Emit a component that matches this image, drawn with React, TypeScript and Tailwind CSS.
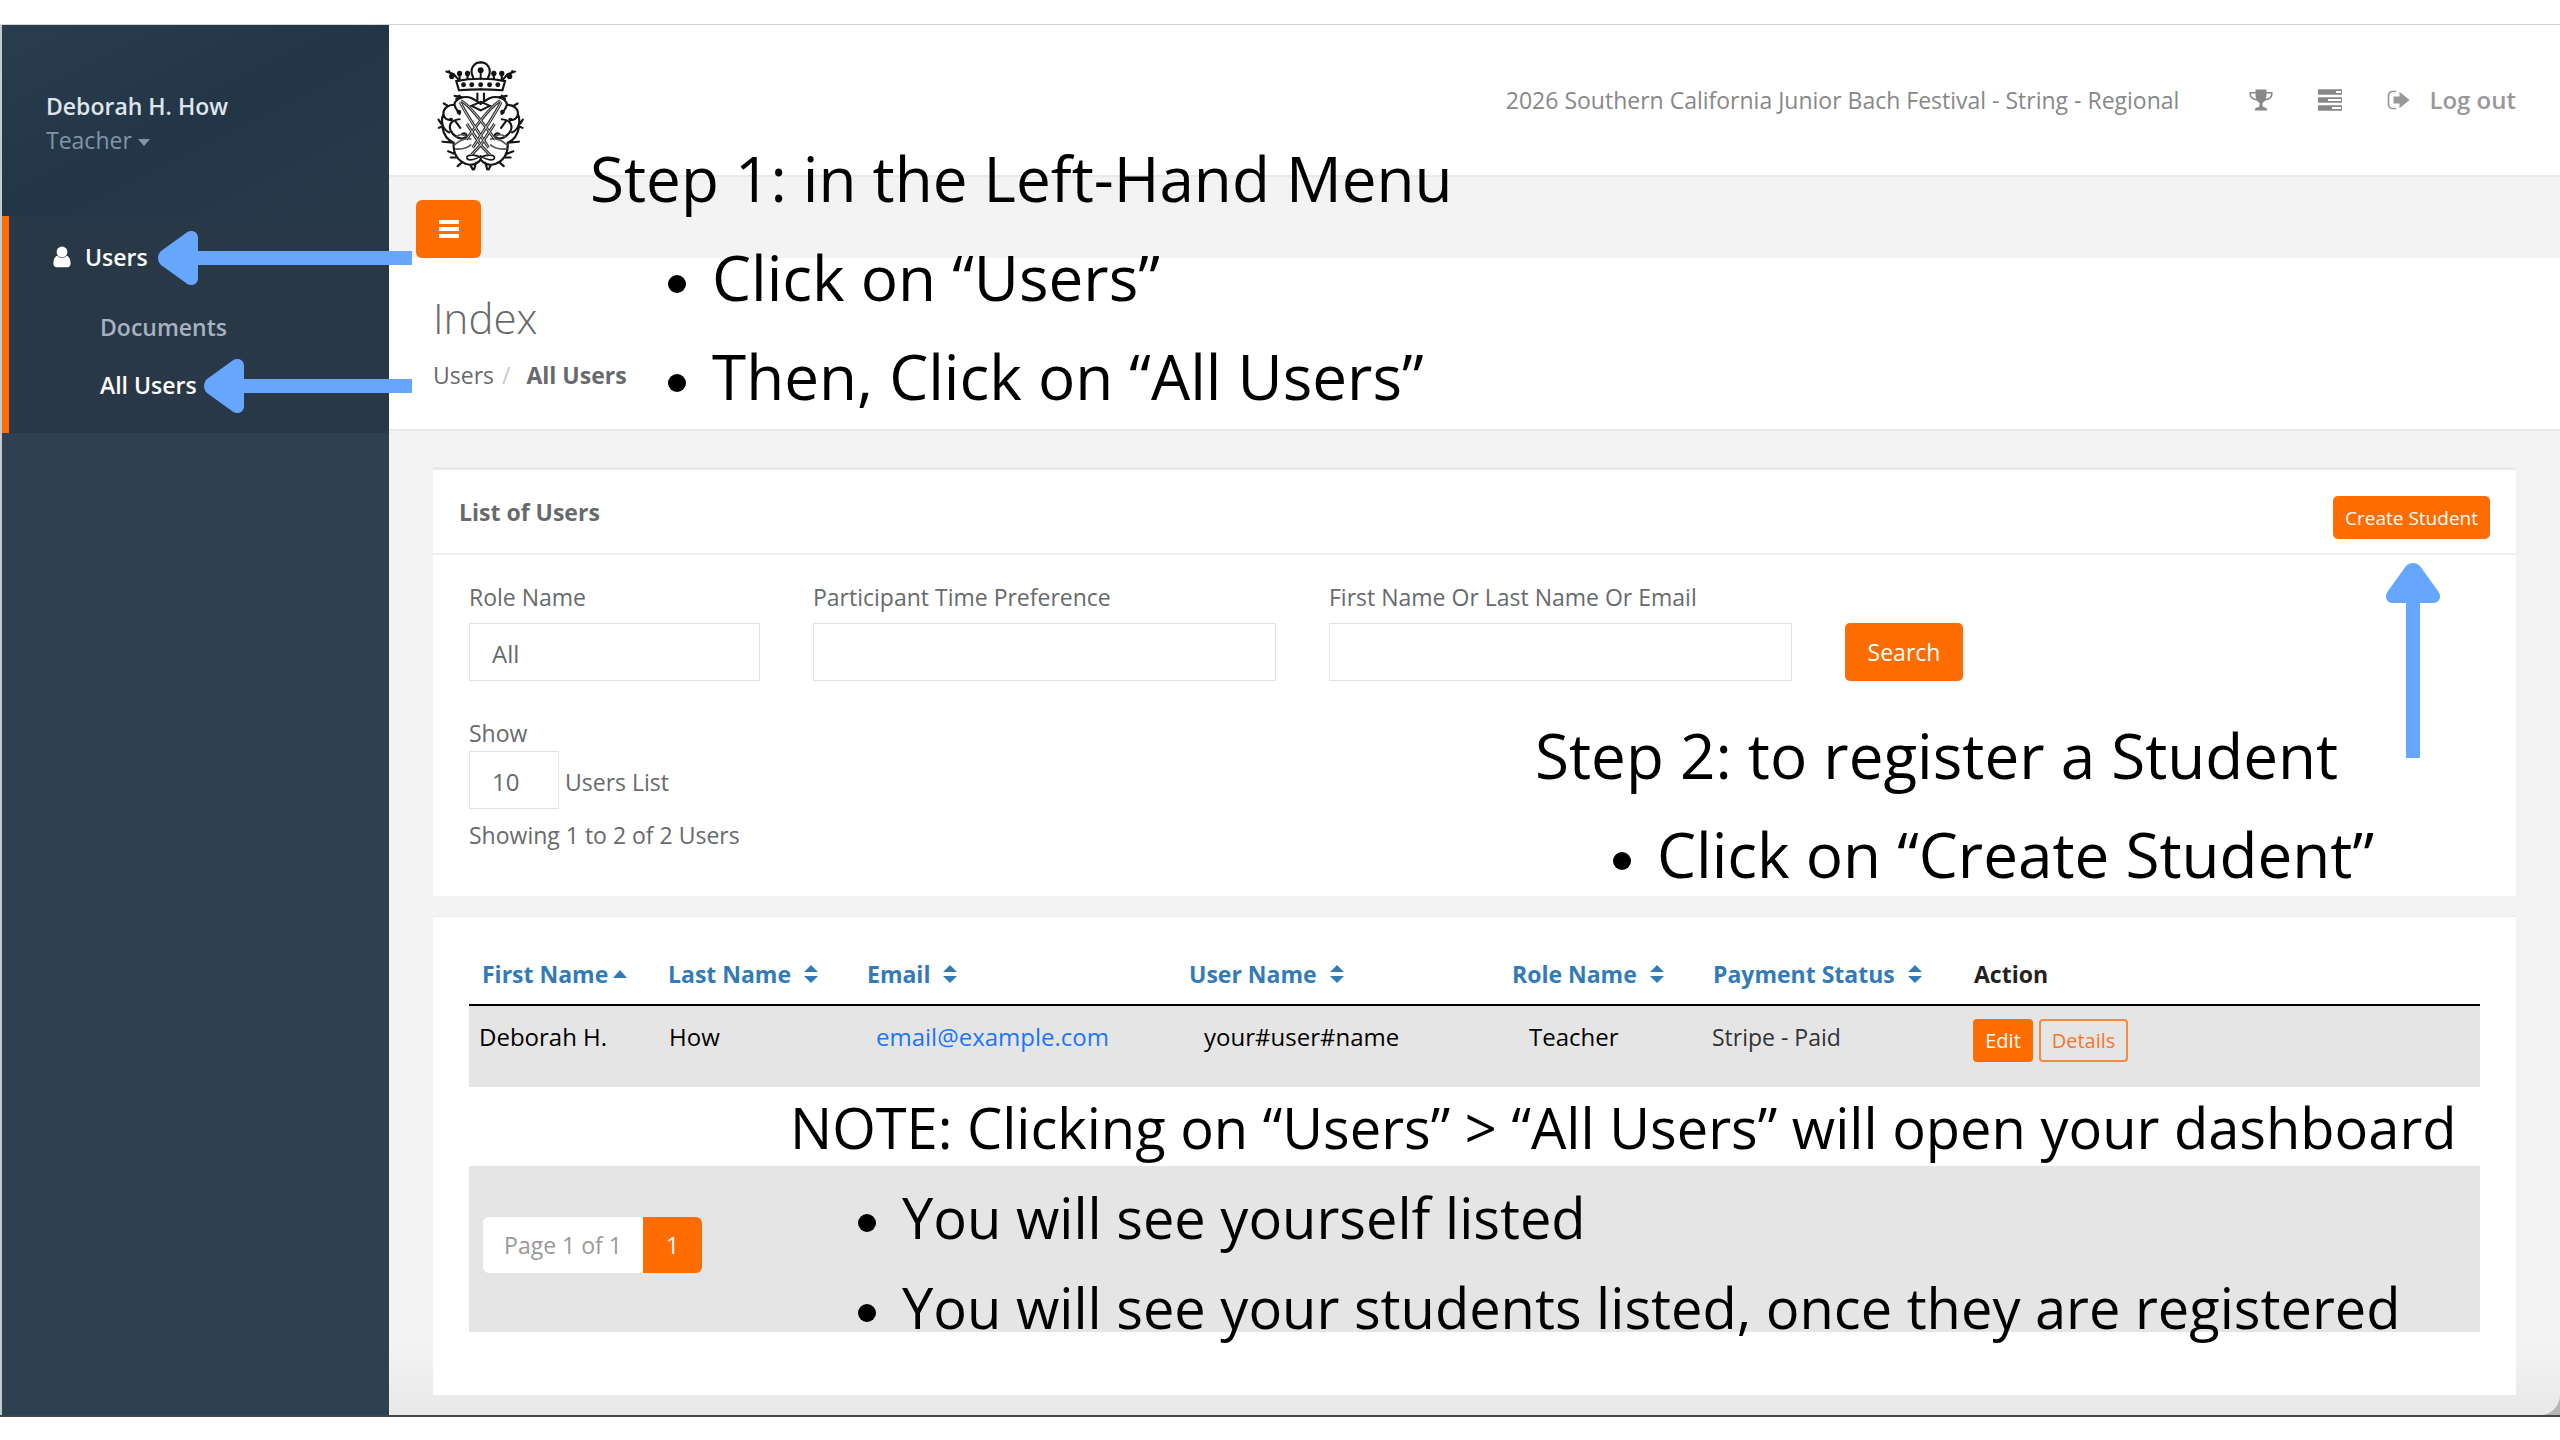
import React from 'react';

type Column = { title: string; width: string; sort?: 'asc' | 'both' };

const columns: Column[] = [
    { title: 'First Name', width: 'w-[186px]', sort: 'asc' },
    { title: 'Last Name', width: 'w-[199px]', sort: 'both' },
    { title: 'Email', width: 'w-[322px]', sort: 'both' },
    { title: 'User Name', width: 'w-[323px]', sort: 'both' },
    { title: 'Role Name', width: 'w-[201px]', sort: 'both' },
    { title: 'Payment Status', width: 'w-[261px]', sort: 'both' },
    { title: 'Action', width: 'w-auto' },
];

const fieldClass =
    'block h-[58px] w-full appearance-none rounded-none border border-[#e1e2e3] bg-white px-[22px] pt-1 text-[24px] text-[#676a6c]';

function UserIcon() {
    return (
        <svg viewBox="0 0 18 22" className="h-[22px] w-[18px] fill-current">
            <circle cx="9" cy="6" r="5.4" />
            <path d="M4.6 9.8c-3 .6-4.2 4.4-4.2 7.600 0 2 1.300 3.800 3.300 3.800h10.600c2 0 3.300-1.800 3.300-3.800 0-3.200-1.200-7-4.200-7.600C12.300 11.200 10.700 12 9 12s-3.300-.8-4.400-2.200z" />
        </svg>
    );
}

function TrophyIcon() {
    return (
        <svg viewBox="0 0 24 22" className="h-[22px] w-6 fill-current">
            <path d="M6.500 0.500h11V6c0 4-1.600 6.600-4 8v2.500c0 1.200.8 1.700 2.500 1.900 1.300.2 2 .9 2 2.100v1H6v-1c0-1.200.7-1.900 2-2.100 1.700-.2 2.500-.7 2.500-1.900V14c-2.400-1.400-4-4-4-8z" />
            <path d="M6.800 3.800H1.200V5.500c0 2.700 3 5 7 5.300M17.200 3.800h5.600V5.500c0 2.700-3 5-7 5.300" fill="none" stroke="currentColor" strokeWidth="1.500" />
        </svg>
    );
}

function TasksIcon() {
    return (
        <svg viewBox="0 0 26 22" className="h-[22px] w-[26px]" fill="none" stroke="currentColor">
            <path d="M1 3h24M1 11h24M1 19h24" strokeWidth="5.600" />
            <path d="M19 3h5M11 11h13M15 19h9" stroke="#fff" strokeWidth="2.200" />
        </svg>
    );
}

function SignOutIcon() {
    return (
        <svg viewBox="0 0 24 20" className="h-5 w-6">
            <path d="M9 1.500H5.500A4 4 0 0 0 1.500 5.500v9a4 4 0 0 0 4 4H9" fill="none" stroke="currentColor" strokeWidth="1.700" />
            <path d="M6.500 6.500h6V1.800L22.500 10l-10 8.200v-4.700h-6z" fill="currentColor" />
        </svg>
    );
}

function SortIcon({ kind }: { kind: 'asc' | 'both' }) {
    if (kind === 'asc') {
        return (
            <svg viewBox="0 0 14 8" className="h-2 w-[14px] fill-current">
                <path d="M0 8 7 0l7 8z" />
            </svg>
        );
    }
    return (
        <svg viewBox="0 0 14 18" className="ml-2 h-[18px] w-[14px] fill-current">
            <path d="M0 7 7 0l7 7zM0 11l7 7 7-7z" />
        </svg>
    );
}

// One half of the crest, mirrored around x=246 for the other half
function CrestHalf() {
    return (
        <>
            <path d="M246 149c-24 0-44 1-66 3l-8-28c24-5 48-7 74-7M180 121l-16-18-22-8M160 110l-10-16" />
            <path d="M182 120v-20M206 117V96M224 115c-6-12-9-24-1-36 6-9 14-12 23-12" />
            <path d="M236 182v-20M166 196c2-14 12-20 27-23 22-4 36 8 53 20M166 196c4 14 12 20 16 28M193 173l-26-4M182 168l-10 10" />
            <path d="M166 196c-20 0-34 12-33 28 1 14 12 20 24 17M148 200l-14-8M133 224c-10 24-2 48 18 56M126 253l-8-12M128 262l-9 4" />
            <path d="M182 240c-22 2-34 14-28 32 6 16 28 32 44 24 10-6 4-16-8-12M168 244l16 22" />
            <path d="M130 265c4 24 14 38 34 46l-34-3M164 311c-2 30 8 52 36 64 16 6 32 4 46-12M164 344l-17-7M172 356l-17 0M190 370l-14 12M214 378l8 14M232 372l-6 20" />
            <path d="M166 318c16-14 36-22 50-18M170 330c18 2 34-2 46-12M172 292c10-8 24-6 32 2" strokeWidth="5" stroke="#555" />
            <path d="M246 358c-12-12-44-12-42-1 2 11 26 6 42-5" strokeWidth="5" />
        </>
    );
}

function Crest() {
    return (
        <svg viewBox="114 60 266 340" className="mt-8 h-28 w-[88px]" fill="none" stroke="#151515" strokeWidth="6.500" strokeLinecap="round" role="img" aria-label="Crest">
            <CrestHalf />
            <g transform="translate(492 0) scale(-1 1)">
                <CrestHalf />
            </g>
            <g fill="#151515" stroke="none">
                {[158, 182, 206, 286, 310, 334].map((x) => (
                    <circle key={x} cx={x} cy={x === 158 || x === 334 ? 110 : 101} r="8" />
                ))}
                {[194, 219, 246, 273, 298].map((x) => (
                    <circle key={x} cx={x} cy="135" r="7.500" />
                ))}
                <circle cx="246" cy="91" r="9" />
                <path d="M243 96h6v20h-6z" />
                <circle cx="180" cy="218" r="7" />
                <circle cx="312" cy="218" r="7" />
                <circle cx="156" cy="241" r="6" />
                <circle cx="336" cy="241" r="6" />
            </g>
            <path d="M246 187l-28 12 28 14 28-14z" strokeWidth="6" />
            {/* Woven ribbons: dark outline with a light core */}
            <g stroke="#333" strokeWidth="9" strokeLinecap="butt">
                <path d="M184 188c14 30 50 84 86 138M308 188c-14 30-50 84-86 138" />
                <path d="M186 184c18 8 48 40 104 118M306 184c-18 8-48 40-104 118" />
                <path d="M204 254l42 64 28 30M288 254l-42 64-28 30" />
            </g>
            <g stroke="#ccc" strokeWidth="3" strokeLinecap="butt">
                <path d="M184 188c14 30 50 84 86 138M308 188c-14 30-50 84-86 138" />
                <path d="M186 184c18 8 48 40 104 118M306 184c-18 8-48 40-104 118" />
                <path d="M204 254l42 64 28 30M288 254l-42 64-28 30" />
            </g>
        </svg>
    );
}

function LeftArrow({ className }: { className: string }) {
    return (
        <div className={`absolute right-full flex h-[54px] items-center ${className}`}>
            <svg viewBox="0 0 40 54" className="h-[54px] w-10 shrink-0 fill-[#66a6ff]">
                <path d="M3 20 28 2c5-4 12-2 12 5v40c0 7-7 9-12 5L3 34c-4-4-4-10 0-14z" />
            </svg>
            <div className="h-[14px] flex-1 bg-[#66a6ff]" />
        </div>
    );
}

function Sidebar() {
    return (
        <aside className="w-[389px] shrink-0 border-l-2 border-[#c3cad0] bg-[#2f4050] font-semibold">
            <div className="h-[191px] bg-gradient-to-br from-[#293d4e] via-[#233647] to-[#283a4a] px-11 pt-16 leading-[34px]">
                <div className="text-[#dfe4ed]">Deborah H. How</div>
                <button type="button" className="flex items-center gap-[6px] font-normal text-[#8095a8]">
                    Teacher
                    <svg viewBox="0 0 12 7" className="mt-1 h-[7px] w-3 fill-current">
                        <path d="M0 0h12L6 7z" />
                    </svg>
                </button>
            </div>
            <nav className="h-[217px] border-l-[7px] border-[#ff6c00] bg-[#293846] pt-[22px] leading-[38px] text-white">
                <a href="#users" className="flex items-center gap-[14px] pl-11">
                    <UserIcon />
                    Users
                </a>
                <div className="flex flex-col gap-5 pt-8 pl-[91px]">
                    <a href="#documents" className="text-[#a7b1c2]">Documents</a>
                    <a href="#all-users">All Users</a>
                </div>
            </nav>
        </aside>
    );
}

function TopBar() {
    return (
        <header className="flex h-[152px] items-center justify-between border-b-2 border-[#e7eaec] bg-white pr-11 pl-12">
            <Crest />
            <div className="flex items-center text-[#888]">
                <span>2026 Southern California Junior Bach Festival - String - Regional</span>
                <a href="#awards" aria-label="Awards" className="ml-[70px]"><TrophyIcon /></a>
                <a href="#tasks" aria-label="Tasks" className="ml-11"><TasksIcon /></a>
                <a href="#logout" className="ml-11 flex items-center gap-[18px] text-[24px] font-semibold text-[#999]">
                    <SignOutIcon />
                    Log out
                </a>
            </div>
        </header>
    );
}

function Filters() {
    return (
        <section className="mx-11 mt-9 h-[429px] border-t-[3px] border-[#e7eaec] bg-white">
            <div className="flex h-[85px] items-center justify-between border-b-2 border-[#eeeff0] px-[26px]">
                <h2 className="font-bold">List of Users</h2>
                <button type="button" className="mt-3 h-[43px] rounded-[5px] bg-[#ff6c00] px-3 text-[19px] font-medium text-white">Create Student</button>
            </div>
            <form className="px-9 pt-[26px]" onSubmit={(e) => e.preventDefault()}>
                <div className="flex items-end gap-[53px]">
                    <div className="w-[291px]">
                        <label htmlFor="role" className="mb-[10px] block">Role Name</label>
                        <select id="role" className={fieldClass}>
                            <option>All</option>
                        </select>
                    </div>
                    <div className="w-[463px]">
                        <label htmlFor="preference" className="mb-[10px] block">Participant Time Preference</label>
                        <input id="preference" type="text" className={fieldClass} />
                    </div>
                    <div className="w-[463px]">
                        <label htmlFor="query" className="mb-[10px] block">First Name Or Last Name Or Email</label>
                        <input id="query" type="text" className={fieldClass} />
                    </div>
                    <button type="submit" className="h-[58px] w-[118px] rounded-[5px] bg-[#ff6c00] text-white">Search</button>
                </div>
                <label htmlFor="size" className="mt-9 mb-[2px] block">Show</label>
                <div className="flex items-center gap-[6px]">
                    <div className="w-[90px]">
                        <select id="size" className={fieldClass}>
                            <option>10</option>
                        </select>
                    </div>
                    <span className="pt-1">Users List</span>
                </div>
                <p className="mt-[10px]">Showing 1 to 2 of 2 Users</p>
            </form>
        </section>
    );
}

function UsersTable() {
    return (
        <section className="mx-11 mt-5 h-[479px] border-t border-[#e7eaec] bg-white px-9 pt-9">
            <table className="w-full table-fixed text-left">
                <thead>
                    <tr className="h-[52px] border-b-2 border-black">
                        {columns.map((col) => (
                            <th key={col.title} className={`${col.width} pb-[10px] pl-[13px] font-bold whitespace-nowrap`}>
                                {col.sort ? (
                                    <button type="button" className="flex items-center gap-[5px] text-[#337ab7]">
                                        {col.title}
                                        <SortIcon kind={col.sort} />
                                    </button>
                                ) : (
                                    <span className="text-[#222]">{col.title}</span>
                                )}
                            </th>
                        ))}
                    </tr>
                </thead>
                <tbody>
                    <tr className="h-[82px] bg-[#e5e5e5] text-black">
                        <td className="pb-5 pl-[10px] text-[24px]">Deborah H.</td>
                        <td className="pb-5 pl-[14px] text-[24px]">How</td>
                        <td className="pb-5 pl-[22px] text-[24px]">
                            <a href="mailto:email@example.com" className="text-[#1a75ff]">email@example.com</a>
                        </td>
                        <td className="pb-5 pl-7 text-[24px]">your#user#name</td>
                        <td className="pb-5 pl-[30px] text-[24px]">Teacher</td>
                        <td className="pb-5 pl-3 text-[#333]">Stripe - Paid</td>
                        <td className="pb-3 pl-3">
                            <div className="flex gap-[6px] text-[20px]">
                                <button type="button" className="h-[43px] w-[60px] rounded-[4px] bg-[#ff6c00] font-medium text-white">Edit</button>
                                <button type="button" className="h-[43px] w-[89px] rounded-[4px] border-2 border-[#f58a42] font-medium text-[#f5762a]">Details</button>
                            </div>
                        </td>
                    </tr>
                </tbody>
            </table>
            <div className="mt-[79px] flex h-[166px] items-center bg-[#e5e5e5] pb-2 pl-[14px]">
                <div className="flex h-14 leading-[56px]">
                    <span className="w-[160px] rounded-l-[6px] bg-white text-center text-[#999]">Page 1 of 1</span>
                    <a href="#page-1" className="w-[59px] rounded-r-[6px] bg-[#ff6c00] text-center text-white">1</a>
                </div>
            </div>
        </section>
    );
}

function NoteItem({ children }: { children: React.ReactNode }) {
    return (
        <li className="flex items-center gap-[26px]">
            <span className="mt-3 h-[18px] w-[18px] rounded-full bg-black" />
            {children}
        </li>
    );
}

// Instructions laid over the dashboard
function Notes() {
    return (
        <div className="font-medium whitespace-nowrap text-black">
            <div className="absolute top-[129px] left-[590px] text-[62px] leading-[99px]">
                <p>Step 1: in the Left-Hand Menu</p>
                <ul className="pl-[78px]">
                    <NoteItem>Click on “Users”</NoteItem>
                    <NoteItem>Then, Click on “All Users”</NoteItem>
                </ul>
            </div>
            <div className="absolute top-[706px] left-[1535px] text-[62px] leading-[99px]">
                <p>Step 2: to register a Student</p>
                <ul className="pl-[78px]">
                    <NoteItem>Click on “Create Student”</NoteItem>
                </ul>
            </div>
            <div className="absolute top-[1082px] left-[790px] text-[56px] leading-[90px]">
                <p>NOTE: Clicking on “Users” &gt; “All Users” will open your dashboard</p>
                <ul className="pl-[68px]">
                    <NoteItem>You will see yourself listed</NoteItem>
                    <NoteItem>You will see your students listed, once they are registered</NoteItem>
                </ul>
            </div>
            <div className="absolute top-0 left-[412px]">
                <LeftArrow className="top-[231px] w-[254px]" />
                <LeftArrow className="top-[359px] w-[208px]" />
            </div>
            <div className="absolute top-[563px] right-[120px] flex flex-col items-center">
                <svg viewBox="0 0 54 40" className="h-10 w-[54px] fill-[#66a6ff]">
                    <path d="M20 3 2 28c-4 5-2 12 5 12h40c7 0 9-7 5-12L34 3c-4-4-10-4-14 0z" />
                </svg>
                <div className="h-[155px] w-[14px] bg-[#66a6ff]" />
            </div>
        </div>
    );
}

export default function App() {
    return (
        <div className="relative min-h-screen bg-white py-6 font-['Open_Sans',sans-serif] text-[23px] leading-8 text-[#676a6c]">
            <div className="flex border-t border-b-2 border-t-[#d4d4d4] border-b-[#444] bg-[#b5b5b5]">
                <Sidebar />
                <main className="min-w-0 flex-1 rounded-br-[20px] bg-linear-to-b from-[#f3f3f4] from-95% to-[#e8e8e8] pb-5">
                    <TopBar />
                    <div className="flex h-[81px] items-end pl-[27px]">
                        <button type="button" aria-label="Toggle menu" className="flex h-[58px] w-[65px] items-center justify-center rounded-[6px] bg-[#ff6c00]">
                            <svg viewBox="0 0 20 18" className="h-[18px] w-5 fill-white">
                                <path d="M0 0h20v4H0zM0 7h20v4H0zM0 14h20v4H0z" />
                            </svg>
                        </button>
                    </div>
                    <div className="h-[173px] border-b-2 border-[#e7eaec] bg-white pt-[35px] pl-11">
                        <h1 className="text-[42px] leading-[50px] font-light">Index</h1>
                        <nav className="mt-4 flex gap-2">
                            <a href="#users">Users</a>
                            <span className="text-[#ccc]">/</span>
                            <a href="#all-users" className="ml-2 font-bold">All Users</a>
                        </nav>
                    </div>
                    <Filters />
                    <UsersTable />
                </main>
            </div>
            <Notes />
        </div>
    );
}
